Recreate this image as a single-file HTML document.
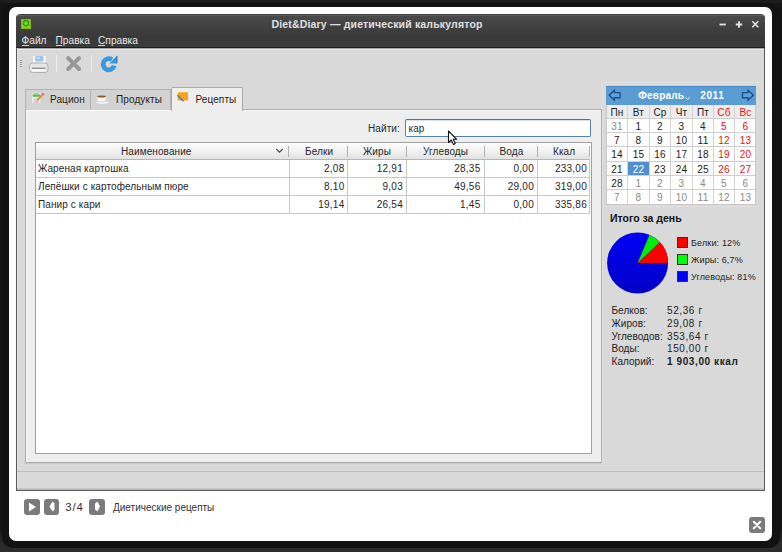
<!DOCTYPE html>
<html><head><meta charset="utf-8">
<style>
*{margin:0;padding:0;box-sizing:border-box}
html,body{width:782px;height:552px;overflow:hidden;background:#151515;font-family:"Liberation Sans",sans-serif;}
.a{position:absolute}
#band{left:1.5px;top:3px;width:778px;height:545px;background:#121212;border-radius:11px}
#frame{left:9px;top:7px;width:763px;height:533.5px;background:#fff;border-radius:7px}
#win{left:16px;top:14px;width:749px;height:477px;background:#d9d9d9;border:1px solid #5a5a5a;border-top:none;border-radius:4px 4px 0 0;overflow:hidden}
#title{left:16px;top:14px;width:749px;height:34px;background:linear-gradient(#3c3c3c 0,#3c3c3c 1px,#5e5e5e 1px,#5e5e5e 2px,#4a4a4a 2px,#3e3e3e 45%,#393939 70%,#3c3c3c 97%,#1e1e1e 97%);border-radius:5px 5px 0 0}
.t{white-space:nowrap;line-height:1}
#ttext{left:271.5px;top:18.5px;font-size:10.5px;letter-spacing:0.17px;font-weight:bold;color:#e0e0e0}
.menu{top:36px;font-size:10.2px;color:#e6e6e6}
.menu u{text-decoration:none}
#content{left:17px;top:48px;width:747px;height:442px;box-shadow:inset 1px 0 0 #e6e6e6;background:linear-gradient(#a8a8a8 0,#a8a8a8 1px,#e9e9e9 1px,#e9e9e9 2px,#d9d9d9 2px)}
.tab{top:89px;height:21px;background:#d3d3d3;border:1px solid #b4b4b4;border-bottom:none}
#page{left:25px;top:109px;width:577px;height:354px;background:#eeeeee;border:1px solid #adadad;box-shadow:inset 1px 1px 0 #fafafa,0 1px 0 #cacaca}
#tab3{left:171px;top:87px;width:72px;height:24px;background:#eeeeee;border:1px solid #a9a9a9;border-bottom:none;border-radius:2px 2px 0 0}
.tt{font-size:10px;letter-spacing:0.1px;color:#1e1e1e}
#input{left:405px;top:119px;width:186px;height:18px;background:#fff;border:1px solid #5a80a8;border-top-color:#4f7398;border-radius:2px;box-shadow:inset 0 1px 0 #d8e2ec}
#table{left:35px;top:142px;width:557px;height:312px;background:#fff;border:1px solid #a0a0a0}
#thead{left:36px;top:143px;width:554px;height:17px;background:linear-gradient(#fdfdfd,#f2f2f2 50%,#e2e2e2);border-bottom:1px solid #b6b6b6}
.hs{top:146px;width:1px;height:11px;background:#b0b0b0}
.vl{top:160px;width:1px;height:54px;background:#c8c8c8}
.hl{left:36px;width:554px;height:1px;background:#c8c8c8}
.cell{font-size:10px;letter-spacing:0.1px;color:#262626}
.num{text-align:right;letter-spacing:0.25px}
#cal{left:606px;top:87px;width:150px;height:118px;background:#fff;border:1px solid #c8c8c8}
#calh{left:606px;top:86px;width:150px;height:19px;background:#599dd4;border-top:1px solid #4a8ac6}
.cd{font-size:10px;letter-spacing:0.2px;color:#1e1e1e;text-align:center;width:21px}
.status{top:471px;left:17px;width:747px;height:1px;background:#bcbcbc}
.btn{top:499px;width:16px;height:16px;background:#7b7b7b;border-radius:3px}
</style></head><body>
<div class="a" style="left:0;top:0;width:782px;height:3px;background:#1c1c1c"></div><div class="a" style="left:0;top:530px;width:782px;height:22px;background:linear-gradient(#181818,#2a2a2a 60%,#2c2c2c)"></div><div class="a" id="band"></div>
<div class="a" id="frame"></div>
<div class="a" id="win"></div>
<div class="a" id="title"></div>
<div class="a" style="left:21px;top:19px;width:10px;height:10px;background:radial-gradient(circle at 50% 40%,#a6ec5a 0,#52bc2c 28%,#2a8a14 48%,#88cc00 56%,#92d800 100%);border:1px solid #7cbc00"></div>
<div class="a t" id="ttext">Diet&amp;Diary — диетический калькулятор</div>
<!-- window controls -->
<svg class="a" style="left:715px;top:17px" width="50" height="14" viewBox="715 17 50 14">
 <path d="M719.5 24.5 H725.8" stroke="#e6e6e6" stroke-width="1.8"/>
 <path d="M735.8 24.5 H742.2 M739 21.3 V27.7" stroke="#e6e6e6" stroke-width="1.8"/>
 <path d="M752.3 21.3 L758.3 27.3 M758.3 21.3 L752.3 27.3" stroke="#e6e6e6" stroke-width="1.6"/>
</svg>
<div class="a" style="left:21.5px;top:45px;width:7px;height:1px;background:#cfcfcf"></div><div class="a" style="left:55.5px;top:45px;width:6.5px;height:1px;background:#cfcfcf"></div><div class="a" style="left:98px;top:45px;width:6.5px;height:1px;background:#cfcfcf"></div><div class="a t menu" style="left:21.5px"><u>Ф</u>айл</div>
<div class="a t menu" style="left:55.5px"><u>П</u>равка</div>
<div class="a t menu" style="left:98px"><u>С</u>правка</div>

<div class="a" id="content"></div>

<!-- toolbar -->
<div class="a" style="left:20px;top:60px;width:2px;height:1px;background:#a0a0a0;box-shadow:0 2px 0 #a0a0a0,0 4px 0 #a0a0a0,0 6px 0 #a0a0a0"></div>

<div class="a" style="left:56px;top:55px;width:1px;height:17px;background:#c0c0c0;border-right:1px solid #eee"></div>

<div class="a" style="left:91px;top:55px;width:1px;height:17px;background:#c0c0c0;border-right:1px solid #eee"></div>


<!-- tabs -->
<div class="a" id="page"></div>
<div class="a tab" style="left:25px;width:66px"></div>
<div class="a tab" style="left:90px;width:81px"></div>
<div class="a" id="tab3"></div>

<div class="a t tt" style="left:50px;top:95px">Рацион</div>

<div class="a t tt" style="left:116px;top:95px">Продукты</div>

<div class="a t tt" style="left:195.5px;top:95px">Рецепты</div>

<!-- search -->
<div class="a t tt" style="left:368px;top:124px;color:#2a2a2a">Найти:</div>
<div class="a" id="input"></div>
<div class="a t tt" style="left:408.5px;top:124px;color:#2a2a2a">кар</div>

<!-- table -->
<div class="a" id="table"></div>
<div class="a" id="thead"></div>
<div class="a hs" style="left:288px"></div>
<div class="a hs" style="left:347px"></div>
<div class="a hs" style="left:406px"></div>
<div class="a hs" style="left:484px"></div>
<div class="a hs" style="left:537px"></div>
<div class="a hs" style="left:589px"></div>
<div class="a hl" style="top:177px"></div>
<div class="a hl" style="top:195px"></div>
<div class="a hl" style="top:213px"></div>
<div class="a vl" style="left:289px"></div>
<div class="a vl" style="left:347px"></div>
<div class="a vl" style="left:406px"></div>
<div class="a vl" style="left:484px"></div>
<div class="a vl" style="left:537px"></div>
<div class="a vl" style="left:589px"></div>
<svg class="a" style="left:275px;top:147.5px" width="9" height="6"><path d="M1.3 1L4.5 4.2L7.7 1" fill="none" stroke="#444" stroke-width="1.1"/></svg>
<div class="a t cell" style="left:121px;top:147px">Наименование</div>
<div class="a t cell" style="left:305px;top:147px">Белки</div>
<div class="a t cell" style="left:363px;top:147px">Жиры</div>
<div class="a t cell" style="left:423px;top:147px">Углеводы</div>
<div class="a t cell" style="left:499.5px;top:147px">Вода</div>
<div class="a t cell" style="left:553px;top:147px">Ккал</div>

<div class="a t cell" style="left:38px;top:164px">Жареная картошка</div>
<div class="a t cell" style="left:38px;top:182px">Лепёшки с картофельным пюре</div>
<div class="a t cell" style="left:38px;top:200px">Панир с кари</div>
<div class="a t cell num" style="left:284.5px;width:60px;top:164px">2,08</div>
<div class="a t cell num" style="left:343px;width:60px;top:164px">12,91</div>
<div class="a t cell num" style="left:420.5px;width:60px;top:164px">28,35</div>
<div class="a t cell num" style="left:474px;width:60px;top:164px">0,00</div>
<div class="a t cell num" style="left:527px;width:60px;top:164px">233,00</div>
<div class="a t cell num" style="left:284.5px;width:60px;top:182px">8,10</div>
<div class="a t cell num" style="left:343px;width:60px;top:182px">9,03</div>
<div class="a t cell num" style="left:420.5px;width:60px;top:182px">49,56</div>
<div class="a t cell num" style="left:474px;width:60px;top:182px">29,00</div>
<div class="a t cell num" style="left:527px;width:60px;top:182px">319,00</div>
<div class="a t cell num" style="left:284.5px;width:60px;top:200px">19,14</div>
<div class="a t cell num" style="left:343px;width:60px;top:200px">26,54</div>
<div class="a t cell num" style="left:420.5px;width:60px;top:200px">1,45</div>
<div class="a t cell num" style="left:474px;width:60px;top:200px">0,00</div>
<div class="a t cell num" style="left:527px;width:60px;top:200px">335,86</div>

<!-- calendar -->
<div class="a" style="left:602px;top:82px;width:158px;height:1px;background:#e4e4e4"></div><div class="a" style="left:602px;top:82px;width:1px;height:382px;background:#e3e3e3"></div><div class="a" style="left:602px;top:206px;width:158px;height:1px;background:#e0e0e0"></div><div class="a" id="cal"></div>
<div class="a" id="calh"></div>


<div class="a t" style="left:638.3px;top:91px;font-size:10px;letter-spacing:0.2px;font-weight:bold;color:#fff">Февраль</div>
<svg class="a" style="left:684px;top:96px" width="7" height="5"><path d="M1 1L3.5 3.5L6 1" fill="none" stroke="#e8f0f8" stroke-width="1"/></svg>
<div class="a t" style="left:700.3px;top:91px;font-size:10px;letter-spacing:0.6px;font-weight:bold;color:#fff">2011</div>
<div class="a" style="left:607px;top:105px;width:148px;height:13px;background:#ececec"></div>
<div class="a" style="left:627px;top:105px;width:1px;height:99px;background:#d2d2d2"></div>
<div class="a" style="left:649px;top:105px;width:1px;height:99px;background:#d2d2d2"></div>
<div class="a" style="left:670px;top:105px;width:1px;height:99px;background:#d2d2d2"></div>
<div class="a" style="left:692px;top:105px;width:1px;height:99px;background:#d2d2d2"></div>
<div class="a" style="left:713px;top:105px;width:1px;height:99px;background:#d2d2d2"></div>
<div class="a" style="left:734px;top:105px;width:1px;height:99px;background:#d2d2d2"></div>
<div class="a" style="left:607px;top:118px;width:148px;height:1px;background:#cfcfcf"></div>
<div class="a" style="left:607px;top:132px;width:148px;height:1px;background:#cfcfcf"></div>
<div class="a" style="left:607px;top:146px;width:148px;height:1px;background:#cfcfcf"></div>
<div class="a" style="left:607px;top:161px;width:148px;height:1px;background:#cfcfcf"></div>
<div class="a" style="left:607px;top:175px;width:148px;height:1px;background:#cfcfcf"></div>
<div class="a" style="left:607px;top:189px;width:148px;height:1px;background:#cfcfcf"></div>
<div class="a" style="left:628px;top:162px;width:21px;height:13px;background:#4f8fcc"></div>
<div class="a t cd" style="left:606px;width:22px;top:108px;color:#222">Пн</div>
<div class="a t cd" style="left:627px;width:23px;top:108px;color:#222">Вт</div>
<div class="a t cd" style="left:649px;width:22px;top:108px;color:#222">Ср</div>
<div class="a t cd" style="left:670px;width:23px;top:108px;color:#222">Чт</div>
<div class="a t cd" style="left:692px;width:22px;top:108px;color:#222">Пт</div>
<div class="a t cd" style="left:713px;width:22px;top:108px;color:#f01010">Сб</div>
<div class="a t cd" style="left:734px;width:23px;top:108px;color:#f01010">Вс</div>
<div class="a t cd" style="left:606px;width:22px;top:122px;color:#8a8a8a">31</div>
<div class="a t cd" style="left:627px;width:23px;top:122px;color:#222">1</div>
<div class="a t cd" style="left:649px;width:22px;top:122px;color:#222">2</div>
<div class="a t cd" style="left:670px;width:23px;top:122px;color:#222">3</div>
<div class="a t cd" style="left:692px;width:22px;top:122px;color:#222">4</div>
<div class="a t cd" style="left:713px;width:22px;top:122px;color:#f01010">5</div>
<div class="a t cd" style="left:734px;width:23px;top:122px;color:#f01010">6</div>
<div class="a t cd" style="left:606px;width:22px;top:136px;color:#222">7</div>
<div class="a t cd" style="left:627px;width:23px;top:136px;color:#222">8</div>
<div class="a t cd" style="left:649px;width:22px;top:136px;color:#222">9</div>
<div class="a t cd" style="left:670px;width:23px;top:136px;color:#222">10</div>
<div class="a t cd" style="left:692px;width:22px;top:136px;color:#222">11</div>
<div class="a t cd" style="left:713px;width:22px;top:136px;color:#f01010">12</div>
<div class="a t cd" style="left:734px;width:23px;top:136px;color:#f01010">13</div>
<div class="a t cd" style="left:606px;width:22px;top:150px;color:#222">14</div>
<div class="a t cd" style="left:627px;width:23px;top:150px;color:#222">15</div>
<div class="a t cd" style="left:649px;width:22px;top:150px;color:#222">16</div>
<div class="a t cd" style="left:670px;width:23px;top:150px;color:#222">17</div>
<div class="a t cd" style="left:692px;width:22px;top:150px;color:#222">18</div>
<div class="a t cd" style="left:713px;width:22px;top:150px;color:#f01010">19</div>
<div class="a t cd" style="left:734px;width:23px;top:150px;color:#f01010">20</div>
<div class="a t cd" style="left:606px;width:22px;top:165px;color:#222">21</div>
<div class="a t cd" style="left:627px;width:23px;top:165px;color:#fff">22</div>
<div class="a t cd" style="left:649px;width:22px;top:165px;color:#222">23</div>
<div class="a t cd" style="left:670px;width:23px;top:165px;color:#222">24</div>
<div class="a t cd" style="left:692px;width:22px;top:165px;color:#222">25</div>
<div class="a t cd" style="left:713px;width:22px;top:165px;color:#f01010">26</div>
<div class="a t cd" style="left:734px;width:23px;top:165px;color:#f01010">27</div>
<div class="a t cd" style="left:606px;width:22px;top:179px;color:#222">28</div>
<div class="a t cd" style="left:627px;width:23px;top:179px;color:#8a8a8a">1</div>
<div class="a t cd" style="left:649px;width:22px;top:179px;color:#8a8a8a">2</div>
<div class="a t cd" style="left:670px;width:23px;top:179px;color:#8a8a8a">3</div>
<div class="a t cd" style="left:692px;width:22px;top:179px;color:#8a8a8a">4</div>
<div class="a t cd" style="left:713px;width:22px;top:179px;color:#8a8a8a">5</div>
<div class="a t cd" style="left:734px;width:23px;top:179px;color:#8a8a8a">6</div>
<div class="a t cd" style="left:606px;width:22px;top:193px;color:#8a8a8a">7</div>
<div class="a t cd" style="left:627px;width:23px;top:193px;color:#8a8a8a">8</div>
<div class="a t cd" style="left:649px;width:22px;top:193px;color:#8a8a8a">9</div>
<div class="a t cd" style="left:670px;width:23px;top:193px;color:#8a8a8a">10</div>
<div class="a t cd" style="left:692px;width:22px;top:193px;color:#8a8a8a">11</div>
<div class="a t cd" style="left:713px;width:22px;top:193px;color:#8a8a8a">12</div>
<div class="a t cd" style="left:734px;width:23px;top:193px;color:#8a8a8a">13</div>

<div class="a t" style="left:610px;top:212.5px;font-size:10.5px;font-weight:bold;color:#111">Итого за день</div>
<svg class="a" style="left:600px;top:226px" width="80" height="74" viewBox="0 0 80 74">
 <defs><linearGradient id="bg1" x1="0" y1="0" x2="0" y2="1"><stop offset="0" stop-color="#0000f4"/><stop offset="1" stop-color="#0000c8"/></linearGradient></defs><circle cx="37.6" cy="37" r="30.5" fill="url(#bg1)"/>
 <path d="M37.6 37 L68.1 37 A30.5 30.5 0 0 0 59.9 16.1 Z" fill="#ff0000"/>
 <path d="M37.6 37 L59.9 16.1 A30.5 30.5 0 0 0 49.5 8.9 Z" fill="#00ee00"/>
</svg>
<div class="a" style="left:677px;top:237px;width:11px;height:11px;background:#f00;border:1px solid #333"></div>
<div class="a" style="left:677px;top:254px;width:11px;height:11px;background:#0f0;border:1px solid #333"></div>
<div class="a" style="left:677px;top:271px;width:11px;height:11px;background:#00f;border:1px solid #333"></div>
<div class="a t" style="left:691px;top:239px;font-size:9px;letter-spacing:0.15px;color:#222">Белки: 12%</div>
<div class="a t" style="left:691px;top:256px;font-size:9px;letter-spacing:0.15px;color:#222">Жиры: 6,7%</div>
<div class="a t" style="left:691px;top:273px;font-size:9px;letter-spacing:0.15px;color:#222">Углеводы: 81%</div>
<div class="a t" style="left:611.5px;top:305.2px;font-size:10px;letter-spacing:0.05px;color:#222;line-height:12.65px">Белков:<br>Жиров:<br>Углеводов:<br>Воды:<br>Калорий:</div>
<div class="a t" style="left:667px;top:305.2px;font-size:10px;letter-spacing:0.6px;color:#222;line-height:12.65px">52,36 г<br>29,08 г<br>353,64 г<br>150,00 г<br><b>1 903,00 ккал</b></div>

<div class="a status"></div><div class="a" style="left:17px;top:488px;width:747px;height:2px;background:linear-gradient(#cecece,#b4b4b4)"></div>
<!-- bottom controls -->
<div class="a btn" style="left:24px"></div>
<svg class="a" style="left:24px;top:499px" width="16" height="16"><path d="M5 3.5 L12 8 L5 12.5Z" fill="#fff"/></svg>
<div class="a btn" style="left:44px;width:15px"></div>
<svg class="a" style="left:44px;top:499px" width="15" height="16"><path d="M8.5 2.5 L5.5 7.5 L8.5 12.5 L10.5 10.5 V4.5Z" fill="#fff"/></svg>
<div class="a t" style="left:65.2px;top:502px;font-size:11.4px;color:#333;letter-spacing:0.9px">3/4</div>
<div class="a btn" style="left:89px"></div>
<svg class="a" style="left:89px;top:499px" width="16" height="16"><path d="M8.5 2.5 L11 7.5 L8.5 12.5 L6 10.5 V4.5Z" fill="#fff"/></svg>
<div class="a t" style="left:113px;top:502.5px;font-size:10px;color:#333">Диетические рецепты</div>
<div class="a" style="left:749px;top:517px;width:16px;height:16px;background:#7b7b7b;border-radius:3px"></div>
<svg class="a" style="left:749px;top:517px" width="16" height="16"><path d="M4.8 4.8L11.2 11.2M11.2 4.8L4.8 11.2" stroke="#fff" stroke-width="2.1" stroke-linecap="round"/></svg>

<!-- pointer -->
<svg class="a" style="left:447px;top:130px" width="12" height="16" viewBox="0 0 12 16">
 <path d="M1.5 1 V12.5 L4.2 10 L6.5 14.5 L8.3 13.6 L6.2 9.3 L9.7 9.3 Z" fill="#fff" stroke="#111" stroke-width="1.1" stroke-linejoin="round"/>
</svg>

<svg class="a" style="left:0;top:0" width="782" height="552" viewBox="0 0 782 552">

 <!-- tab icons -->
 <rect x="32" y="92.6" width="8.6" height="11" fill="#fbfbfb" stroke="#cfcfcf" stroke-width="0.6"/>
 <rect x="32.6" y="94.4" width="7.5" height="2.4" fill="#5cb848"/>
 <rect x="33.2" y="93" width="6" height="0.8" fill="#b0b0b0"/>
 <rect x="33.2" y="98.6" width="6" height="0.8" fill="#b6a6c6"/>
 <rect x="33.2" y="100.6" width="6" height="0.8" fill="#a0a0a0"/>
 <rect x="33.2" y="102.4" width="6" height="0.7" fill="#b0b0b0"/>
 <path d="M37 100.5 L42.4 95" stroke="#f0902a" stroke-width="2"/>
 <circle cx="43" cy="94.2" r="1.3" fill="#e87070"/>
 <ellipse cx="102.5" cy="102.6" rx="6.6" ry="1.6" fill="#f4f4f4" stroke="#c8c8c8" stroke-width="0.5"/>
 <path d="M96.6 95.5 H106.4 V99 Q106.4 101.8 101.5 101.8 Q96.6 101.8 96.6 99Z" fill="#f8f8f8" stroke="#c4c4c4" stroke-width="0.6"/>
 <ellipse cx="101.5" cy="96.5" rx="4.4" ry="1.1" fill="#8c5a1c"/>
 <rect x="177.8" y="92.2" width="10.2" height="8.6" rx="0.8" fill="#f7a21c"/>
 <rect x="177.8" y="100.6" width="10.2" height="2" fill="#f6f0ea"/>
 <path d="M177.3 95.2 L183.6 101.3" stroke="#4a84c4" stroke-width="1.6"/>

 <!-- calendar arrows -->
 <path d="M609.2 95.2 L614.4 90.3 V92.6 H620 V97.7 H614.4 V100.1 Z" fill="#5fa0dc" stroke="#1a5088" stroke-width="1.35" stroke-linejoin="miter"/>
 <path d="M753.3 95.2 L748.1 90.3 V92.6 H742.5 V97.7 H748.1 V100.1 Z" fill="#5fa0dc" stroke="#1a5088" stroke-width="1.35" stroke-linejoin="miter"/>
 <!-- printer -->
 <rect x="32.5" y="55.5" width="14" height="8" rx="0.5" fill="#f4f4f4" stroke="#d0d0d0" stroke-width="0.6"/>
 <rect x="35" y="56" width="8.5" height="5.5" rx="1.5" fill="#9ec4ea"/>
 <rect x="36" y="57" width="4" height="2" rx="1" fill="#c4dcf4"/>
 <path d="M29.5 66 Q29.5 63 32.5 63 H45 Q48 63 48 66 V69.5 Q48 72.5 45 72.5 H32.5 Q29.5 72.5 29.5 69.5Z" fill="#e6e6e6" stroke="#b2b2b2" stroke-width="1"/>
 <rect x="32" y="67.6" width="13.5" height="1.3" fill="#8c8c8c"/>
 <rect x="32" y="69.2" width="13.5" height="2.2" fill="#fafafa"/>
 <!-- X -->
 <path d="M68.2 58.2L79 69M79 58.2L68.2 69" stroke="#979797" stroke-width="4" stroke-linecap="round"/>
 <!-- refresh -->
 <path d="M114.2 65.6 A5.6 5.6 0 1 1 112 59.6" fill="none" stroke="#3a98de" stroke-width="4.8"/>
 <path d="M109.3 63.4 L117.2 63.4 L117.2 55.6 Z" fill="#3a98de"/>
 <path d="M117 56 V63.2" stroke="#2a70b8" stroke-width="0.8"/>
</svg>
</body></html>
